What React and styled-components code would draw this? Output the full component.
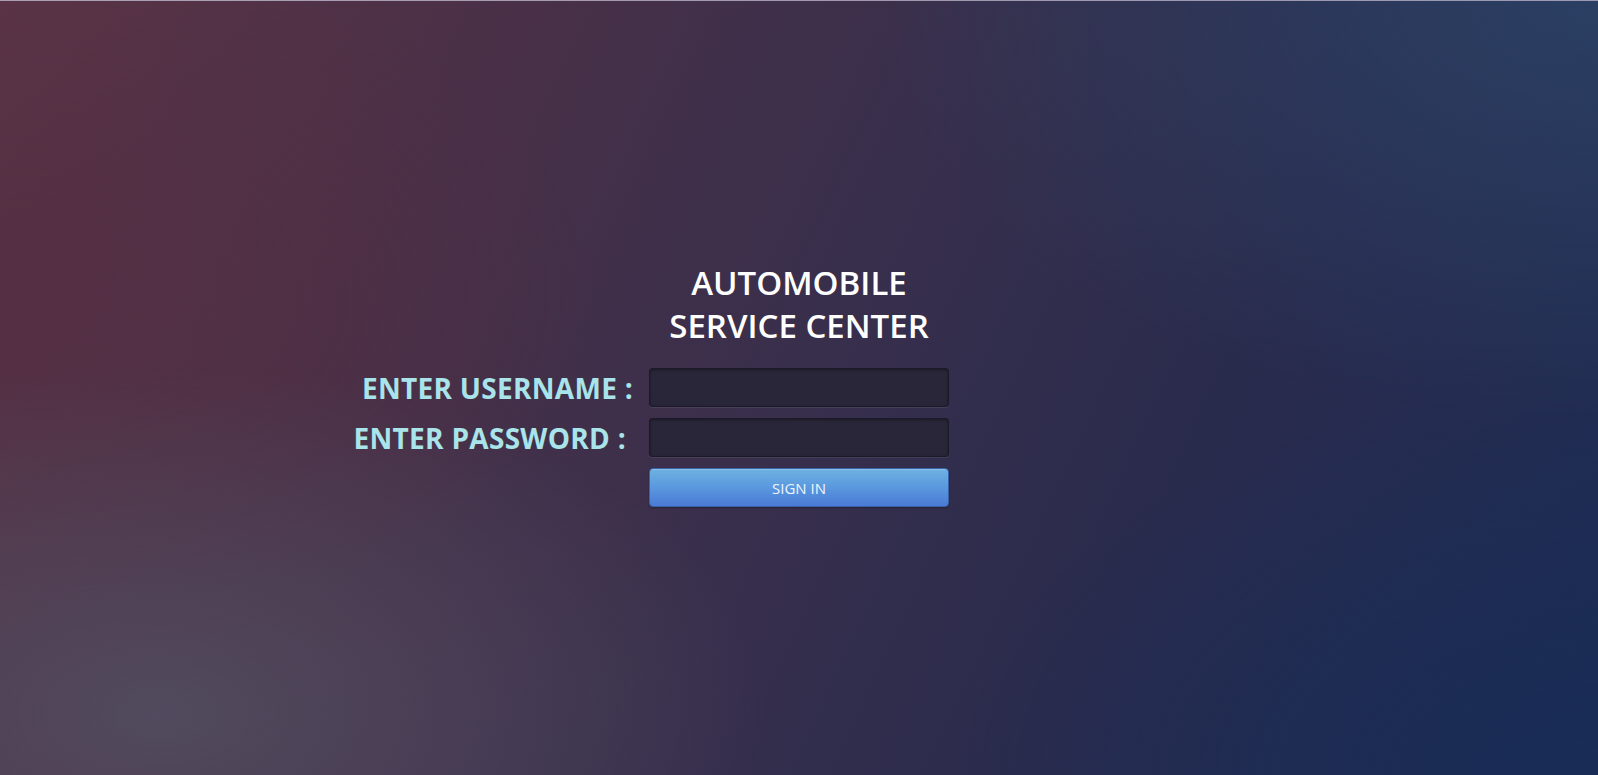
import React from "react";
import styled, { createGlobalStyle } from "styled-components";

const GlobalStyle = createGlobalStyle`
  html, body {
    margin: 0;
    padding: 0;
    height: 100%;
  }
  body {
    font-family: "Open Sans", "Liberation Sans", sans-serif;
  }
  #root {
    min-height: 100vh;
  }
`;

const Page = styled.main`
  box-sizing: border-box;
  min-height: 100vh;
  border-top: 1px solid rgba(200, 190, 210, 0.75);
  display: flex;
  flex-direction: column;
  align-items: center;
  justify-content: center;
  padding-bottom: 8px;
  background:
    radial-gradient(ellipse 38% 45% at 10% 92%, rgba(82, 77, 96, 0.9), rgba(82, 77, 96, 0) 100%),
    radial-gradient(ellipse 35% 45% at 2% 38%, rgba(84, 46, 66, 0.7), rgba(84, 46, 66, 0) 100%),
    radial-gradient(ellipse 45% 55% at 100% 0%, rgba(44, 68, 104, 0.8), rgba(44, 68, 104, 0) 100%),
    radial-gradient(ellipse 40% 50% at 100% 100%, rgba(24, 44, 86, 0.9), rgba(24, 44, 86, 0) 100%),
    linear-gradient(115deg, #5b3446 0%, #4a3047 25%, #382f4c 50%, #292b4d 72%, #1d2c54 100%);
`;

const Title = styled.h1`
  margin: 0 0 21px;
  font-size: 33px;
  line-height: 43px;
  font-weight: 600;
  color: #ffffff;
  text-align: center;
`;

const Form = styled.form`
  width: 100%;
  display: grid;
  grid-template-columns: 1fr 300px 1fr;
  column-gap: 16px;
  row-gap: 11px;
  align-items: center;
`;

const Label = styled.label`
  grid-column: 1;
  justify-self: end;
  padding-right: ${(p) => p.$trail || 0}px;
  font-size: 28px;
  font-weight: 700;
  letter-spacing: 0.3px;
  color: #a8e4ea;
  white-space: nowrap;
`;

const Input = styled.input`
  grid-column: 2;
  box-sizing: border-box;
  width: 100%;
  height: 39px;
  padding: 0 10px;
  border: 1px solid #1b1a27;
  border-radius: 3px;
  background: #282638;
  box-shadow: inset 0 1px 3px rgba(0, 0, 0, 0.35), 0 1px 0 rgba(255, 255, 255, 0.08);
  color: #ffffff;
  font-family: inherit;
  font-size: 15px;
  outline: none;
`;

const Button = styled.button`
  grid-column: 2;
  box-sizing: border-box;
  width: 100%;
  height: 39px;
  border: 1px solid #3a62a8;
  border-radius: 4px;
  background: linear-gradient(180deg, #6db2e2 0%, #5a98de 50%, #4a7ad6 100%);
  box-shadow: inset 0 1px 0 rgba(255, 255, 255, 0.2), 0 1px 2px rgba(0, 0, 0, 0.3);
  color: #eef5ff;
  font-family: inherit;
  font-size: 15px;
  cursor: pointer;
`;

export default function App() {
  return (
    <>
      <GlobalStyle />
      <Page>
        <Title>
          AUTOMOBILE
          <br />
          SERVICE CENTER
        </Title>
        <Form onSubmit={(e) => e.preventDefault()}>
          <Label htmlFor="username">ENTER USERNAME :</Label>
          <Input id="username" type="text" />
          <Label htmlFor="password" $trail={7}>ENTER PASSWORD :</Label>
          <Input id="password" type="password" />
          <Button type="submit">SIGN IN</Button>
        </Form>
      </Page>
    </>
  );
}
